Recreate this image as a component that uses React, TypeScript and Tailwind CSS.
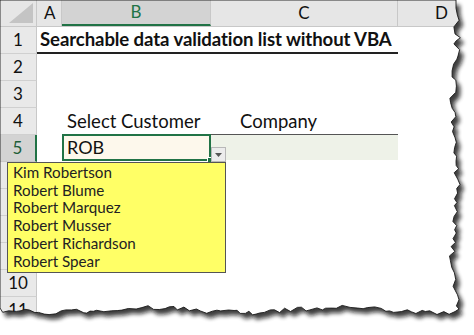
import React from "react";

function rng(seed: number) {
  let s = seed;
  return () => {
    s = (s * 1103515245 + 12345) % 2147483648;
    return s / 2147483648;
  };
}

function paperPath(): string {
  const r = rng(7);
  const pts: [number, number][] = [];
  pts.push([0, 0]);
  pts.push([456, 0]);
  for (let y = 4; y < 306; y += 3 + r() * 4) {
    const x = 455 + (r() - 0.5) * 7 + Math.sin(y / 23) * 2;
    pts.push([x, y]);
  }
  pts.push([459, 309]);
  for (let x = 455; x > 0; x -= 3 + r() * 5) {
    const y = 310 + (r() - 0.5) * 5 + Math.sin(x / 31) * 2.5;
    pts.push([x, y]);
  }
  pts.push([0, 308]);
  return "M" + pts.map((p) => `${p[0].toFixed(1)},${p[1].toFixed(1)}`).join(" L") + " Z";
}

const font = { fontFamily: "Lato, 'Open Sans', sans-serif" };

const rowNums = [1, 2, 3, 4, 5, 6, 7, 8, 9, 10, 11, 12];

export default function App() {
  const d = paperPath();
  const items = [
    "Kim Robertson",
    "Robert Blume",
    "Robert Marquez",
    "Robert Musser",
    "Robert Richardson",
    "Robert Spear",
  ];
  return (
    <div className="relative w-[474px] h-[335px] overflow-hidden bg-white text-[#111]" style={font}>
      <div className="flex h-[27px] bg-[#e6e6e6] border-b border-[#c8c8c8]">
        <div className="relative w-[37px] border-r border-[#c8c8c8]">
          <svg className="absolute right-[3px] bottom-[3px]" width="24" height="20" viewBox="0 0 24 20">
            <polygon points="24,0 24,20 0,20" fill="#c4c4c4" />
          </svg>
        </div>
        <div className="w-[25px] flex items-center pl-[7px] text-[17px] border-r border-[#c8c8c8]">A</div>
        <div className="w-[149px] flex items-center justify-center text-[17px] bg-[#d3d3d3] text-[#217346] border-b-2 border-[#217346] border-r border-r-[#c8c8c8]">B</div>
        <div className="w-[187px] flex items-center justify-center text-[17px] border-r border-[#c8c8c8]">C</div>
        <div className="flex-1 flex items-center pl-[37px] text-[17px]">D</div>
      </div>
      <div className="flex">
        <div className="w-[37px] flex flex-col">
          {rowNums.map((n) => (
            <div
              key={n}
              className={
                n === 5
                  ? "h-[27px] flex items-center justify-center text-[17px] bg-[#d3d3d3] text-[#1e5e3a] border-b border-[#c8c8c8] border-r-2 border-r-[#217346]"
                  : "h-[27px] flex items-center justify-center text-[17px] bg-[#e9e9e9] border-b border-[#d0d0d0] border-r border-r-[#c8c8c8]"
              }
            >
              {n}
            </div>
          ))}
        </div>
        <div className="flex-1 flex flex-col">
          <div className="h-[27px] w-[361px] flex items-center pl-[3px] border-b-2 border-[#222] font-bold text-[18.6px] tracking-[-0.1px] whitespace-nowrap">
            Searchable data validation list without VBA
          </div>
          <div className="h-[27px]" />
          <div className="h-[27px]" />
          <div className="h-[27px] flex items-end border-b border-[#555] ml-[25px] w-[336px] text-[18.5px] leading-[25px]">
            <div className="w-[149px] pl-[5px] whitespace-nowrap">Select Customer</div>
            <div className="pl-[29px]">Company</div>
          </div>
          <div className="h-[27px] flex ml-[25px]">
            <div className="relative w-[149px] h-[27px] -mt-[1px] border-2 border-[#217346] bg-[#fdf8ec] flex items-center pl-[3px] text-[18px]">
              ROB
              <div className="absolute -right-[4px] -bottom-[4px] w-[6px] h-[6px] bg-[#217346] border border-white" />
            </div>
            <div className="w-[187px] h-[25px] bg-[#eef2e8]" />
          </div>
        </div>
      </div>

      <div className="absolute left-[211px] top-[147px] w-[15px] h-[15px] bg-[#ececec] border border-[#b8b8b8] flex items-center justify-center">
        <svg width="7" height="4" viewBox="0 0 7 4">
          <polygon points="0,0 7,0 3.5,4" fill="#555" />
        </svg>
      </div>

      <div className="absolute left-[7px] top-[162px] w-[219px] h-[111px] bg-[#ffff66] border border-[#555] pl-[5px] pt-[1px] text-[15.2px] leading-[17.7px] text-[#222]">
        {items.map((t) => (
          <div key={t}>{t}</div>
        ))}
      </div>

      <svg className="absolute left-0 top-0" width="474" height="335" viewBox="0 0 474 335">
        <defs>
          <mask id="outside">
            <rect x="0" y="0" width="474" height="335" fill="white" />
            <path d={d} fill="black" />
          </mask>
          <filter id="blur" x="-10%" y="-10%" width="120%" height="120%">
            <feGaussianBlur stdDeviation="2" />
          </filter>
        </defs>
        <g mask="url(#outside)">
          <rect x="0" y="0" width="474" height="335" fill="white" />
          <path d={d} fill="#111" opacity="0.8" filter="url(#blur)" transform="translate(4,5)" />
        </g>
        <path d={d} fill="none" stroke="#1a1a1a" strokeWidth="0.9" />
      </svg>
    </div>
  );
}
